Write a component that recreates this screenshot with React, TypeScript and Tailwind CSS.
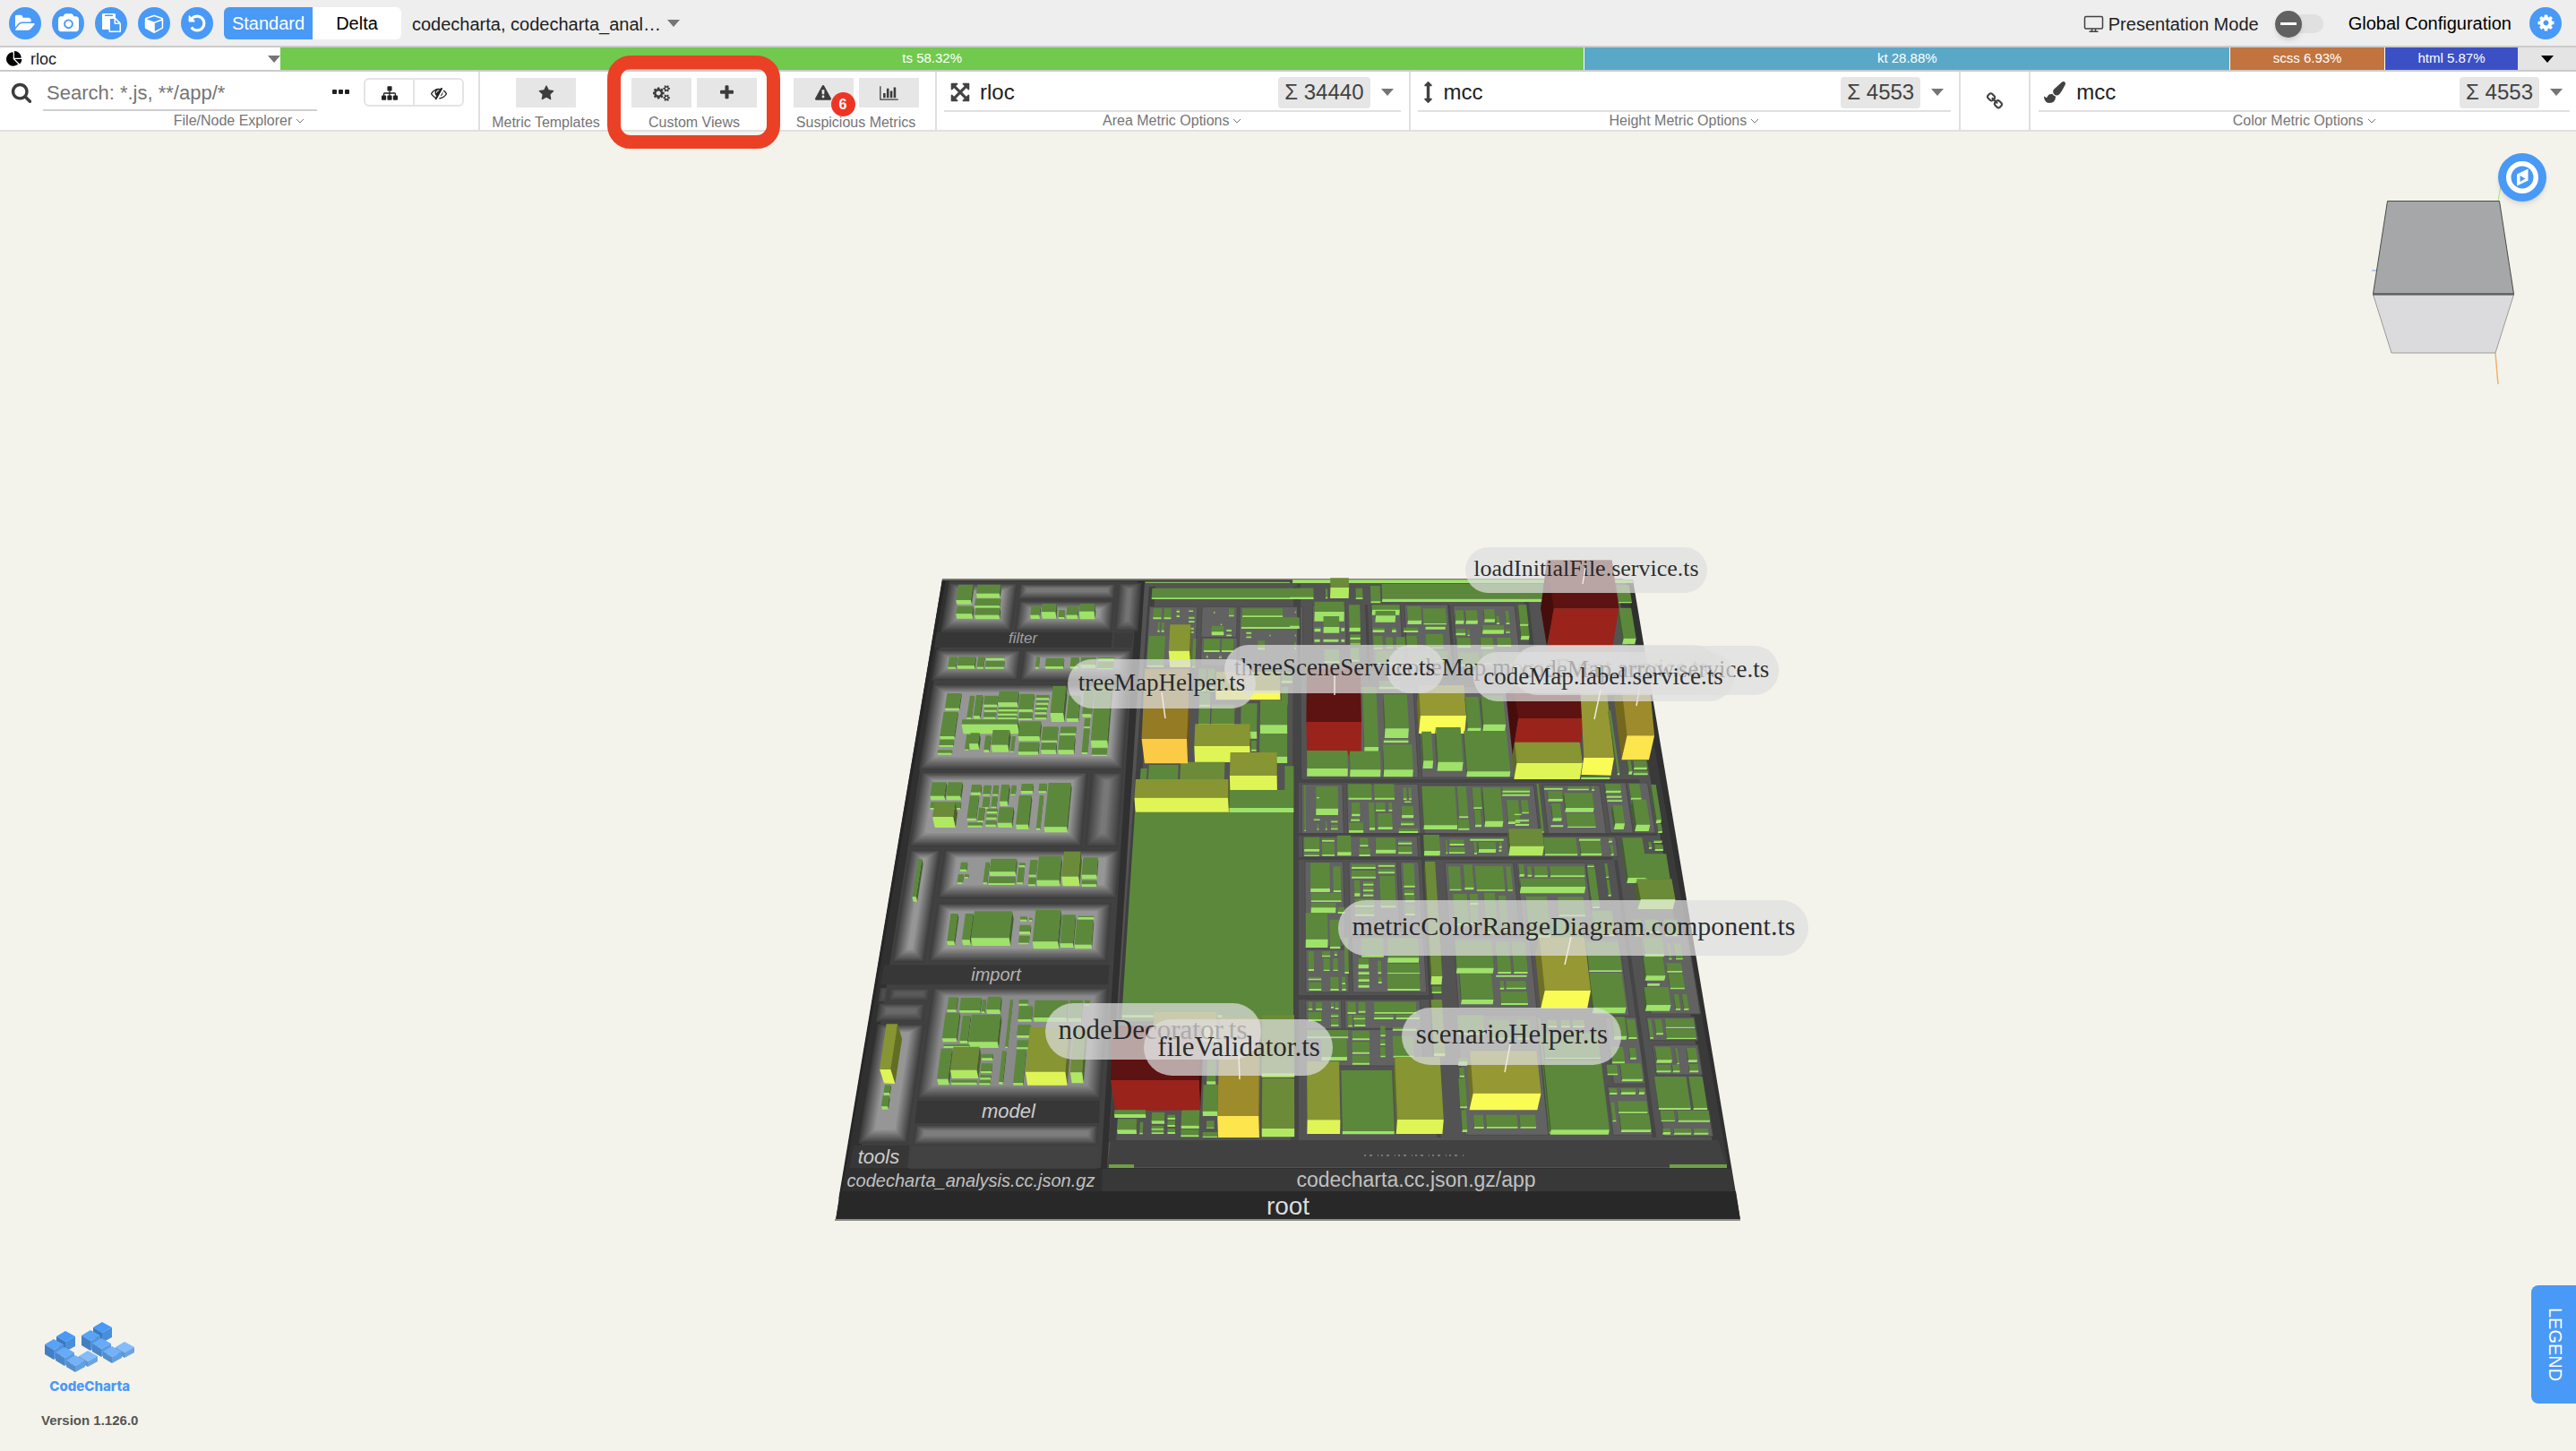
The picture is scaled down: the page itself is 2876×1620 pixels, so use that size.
import React, { ReactNode } from "react";

/* ---------- icons ---------- */

const ICONS = {
  folder:
    "M1815 952q0 31-31 66l-336 396q-43 51-120.500 86.500t-143.500 35.500h-1088q-34 0-60.500-13t-26.500-43q0-31 31-66l336-396q43-51 120.500-86.500t143.500-35.500h1088q34 0 60.500 13t26.500 43zm-343-344v160h-832q-94 0-197 47.500t-164 119.500l-337 396-5 6q0-4-.5-12.500t-.5-12.500v-960q0-92 66-158t158-66h320q92 0 158 66t66 158v32h544q92 0 158 66t66 158z",
  camera:
    "M896 672q119 0 203.500 84.500t84.500 203.500-84.500 203.500-203.500 84.500-203.500-84.500-84.500-203.500 84.500-203.500 203.500-84.500zm704-416q106 0 181 75t75 181v896q0 106-75 181t-181 75h-1408q-106 0-181-75t-75-181v-896q0-106 75-181t181-75h224l51-136q19-49 69.500-84.500t103.500-35.500h512q53 0 103.500 35.500t69.500 84.500l51 136h224zm-704 1152q185 0 316.500-131.500t131.500-316.500-131.500-316.500-316.500-131.500-316.500 131.500-131.500 316.500 131.500 316.500 316.500 131.500z",
  paste:
    "M768 1664h896v-640h-416q-40 0-68-28t-28-68v-416h-384v1152zm256-1440v-64q0-13-9.500-22.500t-22.500-9.500h-704q-13 0-22.500 9.500t-9.500 22.500v64q0 13 9.500 22.500t22.500 9.500h704q13 0 22.500-9.500t9.500-22.500zm256 672h299l-299-299v299zm512 128v672q0 40-28 68t-68 28h-960q-40 0-68-28t-28-68v-160h-544q-40 0-68-28t-28-68v-1344q0-40 28-68t68-28h1088q40 0 68 28t28 68v328q21 13 36 28l408 408q28 28 48 76t20 88z",
  cube: "M896 1629l640-349v-636l-640 233v752zm-64-865l698-254-698-254-698 254zm832-252v768q0 35-18 65t-49 47l-704 384q-28 16-61 16t-61-16l-704-384q-31-17-49-47t-18-65v-768q0-40 23-73t61-47l704-256q22-8 44-8t44 8l704 256q38 14 61 47t23 73z",
  undo: "M1664 896q0 156-61 298t-164 245-245 164-298 61q-172 0-327-72.500t-264-204.500q-7-10-6.500-22.500t8.500-20.500l137-138q10-9 25-9 16 2 23 12 73 95 179 147t225 52q104 0 198.500-40.500t163.500-109.500 109.500-163.500 40.500-198.500-40.500-198.500-109.500-163.500-163.500-109.500-198.500-40.500q-98 0-188 35.500t-160 101.500l137 138q31 30 14 69-17 40-59 40h-448q-26 0-45-19t-19-45v-448q0-42 40-59 39-17 69 14l130 129q107-101 244.500-156.500t284.500-55.500q156 0 298 61t245 164 164 245 61 298z",
  cog: "M1152 896q0-106-75-181t-181-75-181 75-75 181 75 181 181 75 181-75 75-181zm512-109v222q0 12-8 23t-20 13l-185 28q-19 54-39 91 35 50 107 138 10 12 10 25t-9 23q-27 37-99 108t-94 71q-12 0-26-9l-138-108q-44 23-91 38-16 136-29 186-7 28-36 28h-222q-14 0-24.500-8.500t-11.500-21.500l-28-184q-49-16-90-37l-141 107q-10 9-25 9-14 0-25-11-126-114-165-168-7-10-7-23 0-12 8-23 15-21 51-66.500t54-70.500q-27-50-41-99l-183-27q-13-2-21-12.500t-8-23.500v-222q0-12 8-23t19-13l186-28q14-46 39-92-40-57-107-138-10-12-10-24 0-10 9-23 26-36 98.500-107.500t94.500-71.500q13 0 26 10l138 107q44-23 91-38 16-136 29-186 7-28 36-28h222q14 0 24.500 8.500t11.500 21.500l28 184q49 16 90 37l142-107q9-9 24-9 13 0 25 10 129 119 165 170 7 8 7 22 0 12-8 23-15 21-51 66.500t-54 70.500q26 50 41 98l183 28q13 2 21 12.500t8 23.500z",
  pie: "M768 890l546 546q-106 108-247.500 168t-298.500 60q-209 0-385.500-103t-279.500-279.500-103-385.500 103-385.500 279.500-279.500 385.500-103v762zm187 6h773q0 157-60 298.500t-168 247.500zm709-128h-768v-768q209 0 385.500 103t279.500 279.500 103 385.500z",
  search:
    "M1216 832q0-185-131.500-316.500t-316.500-131.500-316.500 131.500-131.500 316.500 131.500 316.500 316.500 131.500 316.500-131.500 131.500-316.500zm512 832q0 52-38 90t-90 38q-54 0-90-38l-343-342q-179 124-399 124-143 0-273.500-55.500t-225-150-150-225-55.500-273.500 55.500-273.500 150-225 225-150 273.500-55.500 273.500 55.500 225 150 150 225 55.500 273.500q0 220-124 399l343 343q37 37 37 90z",
  sitemap:
    "M1792 1248v320q0 40-28 68t-68 28h-320q-40 0-68-28t-28-68v-320q0-40 28-68t68-28h96v-192h-512v192h96q40 0 68 28t28 68v320q0 40-28 68t-68 28h-320q-40 0-68-28t-28-68v-320q0-40 28-68t68-28h96v-192h-512v192h96q40 0 68 28t28 68v320q0 40-28 68t-68 28h-320q-40 0-68-28t-28-68v-320q0-40 28-68t68-28h96v-192q0-52 38-90t90-38h512v-192h-96q-40 0-68-28t-28-68v-320q0-40 28-68t68-28h320q40 0 68 28t28 68v320q0 40-28 68t-68 28h-96v192h512q52 0 90 38t38 90v192h96q40 0 68 28t28 68z",
  eyeSlash:
    "M555 1335l78-141q-87-63-136-159t-49-203q0-121 61-225-229 117-381 353 167 258 427 375zm389-759q0-20-14-34t-34-14q-125 0-214.500 89.500t-89.500 214.500q0 20 14 34t34 14 34-14 14-34q0-86 61-147t147-61q20 0 34-14t14-34zm363-191q0 7-1 9-106 189-316 567t-315 566l-49 89q-10 16-28 16-12 0-134-70-16-10-16-28 0-12 44-87-143-65-263.500-173t-208.500-245q-20-31-20-69t20-69q153-235 380-371t496-136q89 0 180 17l54-97q10-16 28-16 5 0 18 6t31 15.500 33 18.500 31.500 18.500 19.500 11.500q16 10 16 27zm37 447q0 139-79 253.500t-209 164.500l280-502q8 45 8 84zm448 128q0 35-20 69-39 64-109 145-150 172-347.500 267t-419.500 95l74-132q212-18 392.500-137t301.500-307q-115-179-282-294l63-112q95 64 182.500 153t144.500 184q20 34 20 69z",
  star: "M1728 647q0 22-26 48l-363 354 86 500q1 7 1 20 0 21-10.500 35.500t-30.500 14.500q-19 0-40-12l-449-236-449 236q-22 12-40 12-21 0-31.500-14.500t-10.500-35.500q0-6 2-20l86-500-364-354q-25-27-25-48 0-37 56-46l502-73 225-455q19-41 49-41t49 41l225 455 502 73q56 9 56 46z",
  cogs: "M832 896q0-106-75-181t-181-75-181 75-75 181 75 181 181 75 181-75 75-181zm768 512q0-52-38-90t-90-38-90 38-38 90q0 53 37.500 90.500t90.500 37.500 90.500-37.500 37.500-90.500zm0-1024q0-52-38-90t-90-38-90 38-38 90q0 53 37.500 90.500t90.500 37.500 90.500-37.500 37.500-90.500zm-384 421v185q0 10-7 19.500t-16 10.500l-155 24q-11 35-32 76 34 48 90 115 7 11 7 20 0 12-7 19-23 30-82.500 89.500t-78.500 59.500q-11 0-21-7l-115-90q-37 19-77 31-11 108-23 155-7 24-30 24h-186q-11 0-20-7.500t-10-17.500l-23-153q-34-10-75-31l-118 89q-7 7-20 7-11 0-21-8-144-133-144-160 0-9 7-19 10-14 41-53t47-61q-23-44-35-82l-152-24q-10-1-17-9.500t-7-19.500v-185q0-10 7-19.500t16-10.500l155-24q11-35 32-76-34-48-90-115-7-11-7-20 0-12 7-20 22-30 82-89t79-59q11 0 21 7l115 90q34-18 77-32 11-108 23-154 7-24 30-24h186q11 0 20 7.500t10 17.500l23 153q34 10 75 31l118-89q8-7 20-7 11 0 21 8 144 133 144 160 0 8-7 19-12 16-42 54t-45 60q23 48 34 82l152 23q10 2 17 10.500t7 19.500zm640 533v140q0 16-149 31-12 27-30 52 51 113 51 138 0 4-4 7-122 71-124 71-8 0-46-47t-52-68q-20 2-30 2t-30-2q-14 21-52 68t-46 47q-2 0-124-71-4-3-4-7 0-25 51-138-18-25-30-52-149-15-149-31v-140q0-16 149-31 13-29 30-52-51-113-51-138 0-4 4-7 4-2 35-20t59-34 30-16q8 0 46 46.500t52 67.500q20-2 30-2t30 2q51-71 92-112l6-2q4 0 124 70 4 3 4 7 0 25-51 138 17 23 30 52 149 15 149 31zm0-1024v140q0 16-149 31-12 27-30 52 51 113 51 138 0 4-4 7-122 71-124 71-8 0-46-47t-52-68q-20 2-30 2t-30-2q-14 21-52 68t-46 47q-2 0-124-71-4-3-4-7 0-25 51-138-18-25-30-52-149-15-149-31v-140q0-16 149-31 13-29 30-52-51-113-51-138 0-4 4-7 4-2 35-20t59-34 30-16q8 0 46 46.500t52 67.500q20-2 30-2t30 2q51-71 92-112l6-2q4 0 124 70 4 3 4 7 0 25-51 138 17 23 30 52 149 15 149 31z",
  plus: "M1600 736v192q0 40-28 68t-68 28h-416v416q0 40-28 68t-68 28h-192q-40 0-68-28t-28-68v-416h-416q-40 0-68-28t-28-68v-192q0-40 28-68t68-28h416v-416q0-40 28-68t68-28h192q40 0 68 28t28 68v416h416q40 0 68 28t28 68z",
  warning:
    "M1024 1375v-190q0-14-9.500-23.500t-22.500-9.500h-192q-13 0-22.500 9.500t-9.500 23.500v190q0 14 9.500 23.500t22.500 9.500h192q13 0 22.500-9.500t9.500-23.500zm-2-374l18-459q0-12-10-19-13-11-24-11h-220q-11 0-24 11-10 7-10 21l17 457q0 10 10 16.500t24 6.500h185q14 0 23.500-6.500t10.500-16.500zm-14-934l768 1408q35 63-2 126-17 29-46.500 46t-63.500 17h-1536q-34 0-63.500-17t-46.500-46q-37-63-2-126l768-1408q17-31 47-49t65-18 65 18 47 49z",
  chart:
    "M640 896v512h-256v-512h256zm384-512v1024h-256v-1024h256zm1024 1152v128h-2048v-1536h128v1408h1920zm-640-896v768h-256v-768h256zm384-384v1152h-256v-1152h256z",
  expand:
    "M1411 541l-355 355 355 355 144-144q29-31 70-14 39 17 39 59v448q0 26-19 45t-45 19h-448q-42 0-59-40-17-39 14-69l144-144-355-355-355 355 144 144q31 30 14 69-17 40-59 40h-448q-26 0-45-19t-19-45v-448q0-42 40-59 39-17 69 14l144 144 355-355-355-355-144 144q-19 19-45 19-12 0-24-5-40-17-40-59v-448q0-26 19-45t45-19h448q42 0 59 40 17 39-14 69l-144 144 355 355 355-355-144-144q-31-30-14-69 17-40 59-40h448q26 0 45 19t19 45v448q0 42-39 59-13 5-25 5-26 0-45-19z",
  vertical:
    "M1216 320q0 26-19 45t-45 19h-128v1024h128q26 0 45 19t19 45-19 45l-256 256q-19 19-45 19t-45-19l-256-256q-19-19-19-45t19-45 45-19h128v-1024h-128q-26 0-45-19t-19-45 19-45l256-256q19-19 45-19t45 19l256 256q19 19 19 45z",
  link: "M1520 1216q0-40-28-68l-208-208q-28-28-68-28-42 0-72 32 3 3 19 18.500t21.500 21.500 15 19 13 25.500 3.500 27.500q0 40-28 68t-68 28q-15 0-27.500-3.500t-25.500-13-19-15-21.500-21.500-18.500-19q-33 31-33 73 0 40 28 68l206 207q27 27 68 27 40 0 68-26l147-146q28-28 28-67zm-703-705q0-40-28-68l-206-207q-28-28-68-28-39 0-68 27l-147 146q-28 28-28 67 0 40 28 68l208 208q27 27 68 27 42 0 72-31-3-3-19-18.500t-21.500-21.500-15-19-13-25.500-3.500-27.500q0-40 28-68t68-28q15 0 27.500 3.500t25.500 13 19 15 21.500 21.500 18.500 19q33-31 33-73zm895 705q0 120-85 203l-147 146q-83 83-203 83-121 0-204-85l-206-207q-83-83-83-203 0-123 88-209l-88-88q-86 88-208 88-120 0-204-84l-208-208q-84-84-84-204t85-203l147-146q83-83 203-83 121 0 204 85l206 207q83 83 83 203 0 123-88 209l88 88q86-88 208-88 120 0 204 84l208 208q84 84 84 204z",
  brush:
    "M1615 0q70 0 122.500 46.500t52.500 116.500q0 63-45 151-332 629-465 752-97 91-218 91-126 0-216.500-92.500t-90.500-219.500q0-128 92-212l638-579q59-54 130-54zm-909 1034q39 76 106.500 130t150.500 76l1 71q4 213-129.500 347t-348.500 134q-123 0-218-46.500t-152.500-127.500-86.500-183-29-220q7 5 41 30t62 44.500 59 36.500 46 17q41 0 55-37 25-66 57.500-112.500t69.500-76 88-47.500 103-25.500 125-10.500z",
};

function Icon({ name, className, box = "0 0 1792 1792" }: { name: keyof typeof ICONS; className: string; box?: string }) {
  return (
    <svg viewBox={box} className={className} fill="currentColor" aria-hidden="true">
      <path d={ICONS[name]} />
    </svg>
  );
}

function Caret({ className = "text-[#757575]" }: { className?: string }) {
  return (
    <svg viewBox="0 0 14 8" className={`h-2 w-[14px] shrink-0 ${className}`} fill="currentColor" aria-hidden="true">
      <path d="M0 0h14L7 8z" />
    </svg>
  );
}

function Chevron() {
  return (
    <svg viewBox="0 0 10 8" className="h-2 w-[10px]" fill="none" stroke="currentColor" strokeWidth="1" aria-hidden="true">
      <path d="M1 2l4 4 4-4" />
    </svg>
  );
}

/* ---------- toolbar pieces ---------- */

function RoundButton({ label, children }: { label: string; children: ReactNode }) {
  return (
    <button aria-label={label} className="flex size-9 items-center justify-center rounded-full bg-[#4999f6] text-white">
      {children}
    </button>
  );
}

function FlatButton({ label, children }: { label: string; children: ReactNode }) {
  return (
    <button aria-label={label} className="relative flex h-[33px] w-[67px] items-center justify-center bg-[#e6e6e6] text-[#3c3c3c]">
      {children}
    </button>
  );
}

function ToolGroup({ title, className, children }: { title: string; className: string; children: ReactNode }) {
  return (
    <div className={`flex shrink-0 flex-col items-center pt-[7px] ${className}`}>
      <div className="flex gap-[6px]">{children}</div>
      <div className="mt-[7px] whitespace-nowrap text-[16px] leading-5 text-[#757575]">{title}</div>
    </div>
  );
}

function OptionsToggle({ title }: { title: string }) {
  return (
    <button className="mx-auto flex items-center gap-1 whitespace-nowrap text-[16px] leading-5 text-[#757575]">
      {title}
      <Chevron />
    </button>
  );
}

function MetricPanel({ title, value, sum, icon, className }: { title: string; value: string; sum: string; icon: ReactNode; className: string }) {
  return (
    <div className={`flex min-w-0 flex-col ${className}`}>
      <div className="flex h-[46px] items-center border-b-2 border-[#e0e0e0] pl-[6px] pr-2 pt-[3px]">
        <span className="flex shrink-0 items-center text-[#424242]">{icon}</span>
        <select aria-label={title} className="min-w-0 flex-1 appearance-none bg-transparent text-[24px] leading-8 text-[#212121]">
          <option>{value}</option>
        </select>
        <span className="mr-3 flex h-[35px] items-center rounded bg-[#e6e6e6] px-[7px] text-[24px] text-[#424242]">Σ {sum}</span>
        <Caret />
      </div>
      <OptionsToggle title={title} />
    </div>
  );
}

/* ---------- city map drawing ---------- */

type View = { ox: number; oy: number; sx: number; sy: number };
const A: View = { ox: 920, oy: 600, sx: 2.8, sy: 3 };
const B: View = { ox: 1440, oy: 600, sx: 2.6133, sy: 3 };
const C: View = { ox: 920, oy: 980, sx: 2.8, sy: 3 };
const D: View = { ox: 1440, oy: 980, sx: 2.6133, sy: 3 };

const VX = 1437;
const VY = -1675;
const at = (x: number, y0: number, y1: number) => VX + ((x - VX) * (y1 - VY)) / (y0 - VY);
const f = (n: number) => n.toFixed(1);

function quad(x0: number, x1: number, y0: number, y1: number) {
  return `${f(x0)},${f(y0)} ${f(x1)},${f(y0)} ${f(at(x1, y0, y1))},${f(y1)} ${f(at(x0, y0, y1))},${f(y1)}`;
}

const PAL: Record<string, [string, string, string]> = {
  g: ["#5c883c", "#9ee269", "#41622b"],
  h: ["#6b8b38", "#b1e862", "#4b6327"],
  o: ["#879532", "#dff555", "#5f6b25"],
  y: ["#969833", "#f8fc55", "#6e7124"],
  a: ["#967b25", "#fbcb46", "#6b5519"],
  b: ["#9e8b2b", "#fde54d", "#75681d"],
  r: ["#5c1311", "#9a231c", "#460d0c"],
};

type Block = [number, number, number, number, number, string?];

function Blocks({ v, data }: { v: View; data: Block[] }) {
  return (
    <>
      {data.map(([x, y, w, t, fr, c = "g"], i) => {
        const [top, front, side] = PAL[c];
        const x0 = v.ox + x / v.sx;
        const x1 = v.ox + (x + w) / v.sx;
        const y0 = v.oy + y / v.sy;
        const y1 = y0 + t / v.sy;
        const y2 = y1 + fr / v.sy;
        const b0 = at(x0, y0, y1);
        const b1 = at(x1, y0, y1);
        const s = ((VX - (x0 + x1) / 2) / 480) * (fr / v.sy) * 0.28;
        const sideX0 = s > 0 ? x1 : x0;
        const sideX1 = s > 0 ? b1 : b0;
        return (
          <g key={i}>
            {Math.abs(s) > 0.2 && (
              <polygon
                fill={side}
                points={`${f(sideX0)},${f(y0)} ${f(sideX0 + s)},${f(y0 + fr / v.sy)} ${f(sideX1 + s)},${f(y2)} ${f(sideX1)},${f(y1)}`}
              />
            )}
            <polygon fill={top} points={quad(x0, x1, y0, y1)} />
            <polygon fill={front} points={`${f(b0)},${f(y1)} ${f(b1)},${f(y1)} ${f(b1 + s)},${f(y2)} ${f(b0 + s)},${f(y2)}`} />
          </g>
        );
      })}
    </>
  );
}

function Poly({ v, fill, p }: { v: View; fill: string; p: number[] }) {
  const pts: string[] = [];
  for (let i = 0; i < p.length; i += 2) pts.push(`${f(v.ox + p[i] / v.sx)},${f(v.oy + p[i + 1] / v.sy)}`);
  return <polygon fill={fill} points={pts.join(" ")} />;
}

/* A terrace: nested frames that get lighter towards the middle. */
function Terrace({ v, x0, x1, y0, y1, max = 150 }: { v: View; x0: number; x1: number; y0: number; y1: number; max?: number }) {
  const px0 = v.ox + x0 / v.sx;
  const px1 = v.ox + x1 / v.sx;
  const py0 = v.oy + y0 / v.sy;
  const py1 = v.oy + y1 / v.sy;
  const inset = Math.min(15, (px1 - px0) / 2.4, (py1 - py0) / 2.2);
  const n = 9;
  return (
    <>
      {Array.from({ length: n }, (_, i) => {
        const d = (inset * i) / (n - 1);
        const g = Math.round(62 + ((max - 62) * i) / (n - 1));
        const l = at(px0, py0, py0 + d * 0.6) + d;
        const r = at(px1, py0, py0 + d * 0.6) - d;
        return <polygon key={i} fill={`rgb(${g},${g},${g})`} points={quad(l, r, py0 + d * 0.6, py1 - d)} />;
      })}
    </>
  );
}

const TERRACES: [View, number, number, number, number, number?][] = [
  [A, 390, 606, 152, 316],
  [A, 612, 912, 155, 208, 120],
  [A, 608, 908, 212, 316],
  [A, 920, 992, 152, 314, 115],
  [A, 352, 618, 376, 480],
  [A, 624, 965, 376, 482],
  [A, 340, 955, 492, 780],
  [A, 303, 826, 786, 1036],
  [A, 836, 936, 786, 1038, 120],
  [A, 268, 366, 1046, 1424],
  [A, 376, 926, 1046, 1210],
  [C, 354, 898, 85, 282],
  [C, 176, 202, 368, 416, 80],
  [C, 206, 332, 370, 414, 90],
  [C, 172, 318, 420, 482, 105],
  [C, 168, 314, 490, 890],
  [C, 340, 890, 368, 742, 138],
  [C, 286, 858, 828, 896, 125],
];

const LEFT_TOP: Block[] = [
  [420, 158, 46, 52, 14], [480, 158, 72, 30, 15], [474, 205, 78, 24, 7], [416, 230, 50, 26, 16], [474, 236, 76, 24, 14],
  [648, 230, 28, 30, 13], [683, 222, 43, 28, 22], [735, 243, 18, 24, 6], [760, 230, 35, 30, 13], [800, 222, 46, 26, 26],
  [392, 400, 24, 34, 6], [420, 400, 54, 30, 10], [482, 400, 20, 34, 6], [506, 400, 58, 4, 8], [506, 414, 58, 20, 6],
  [664, 400, 10, 34, 6], [694, 404, 56, 28, 8], [772, 402, 24, 30, 8], [804, 402, 46, 24, 12], [858, 402, 50, 4, 8], [856, 416, 50, 22, 4],
  [385, 522, 44, 50, 8], [374, 584, 44, 82, 9], [362, 678, 44, 18, 6], [356, 712, 44, 10, 6],
  [456, 530, 14, 74, 5], [476, 528, 20, 70, 10], [502, 530, 42, 30, 8], [502, 570, 38, 8, 6], [500, 586, 38, 16, 6],
  [548, 515, 60, 38, 14], [545, 570, 60, 6, 6], [544, 584, 60, 6, 6], [543, 598, 60, 6, 6],
  [613, 524, 44, 52, 8], [610, 586, 42, 20, 6],
  [664, 528, 40, 10, 6], [664, 546, 38, 8, 6], [662, 562, 36, 8, 6], [660, 578, 36, 8, 6], [660, 594, 36, 10, 6],
  [716, 498, 40, 90, 30], [765, 530, 36, 76, 12], [815, 500, 28, 92, 10], [850, 480, 50, 200, 24], [838, 706, 48, 22, 4],
  [815, 606, 18, 28, 4], [812, 640, 18, 80, 6], [432, 610, 174, 16, 32],
  [446, 660, 12, 50, 4], [458, 655, 28, 36, 20], [505, 664, 16, 48, 8], [528, 645, 52, 50, 24], [588, 666, 10, 50, 4],
  [612, 616, 66, 50, 16], [610, 686, 62, 32, 10], [684, 634, 48, 46, 6], [680, 688, 46, 24, 14], [740, 634, 48, 22, 6], [736, 664, 48, 48, 15],
  [338, 820, 44, 46, 14], [388, 820, 44, 46, 14], [334, 886, 94, 20, 6], [346, 888, 64, 48, 36, "h"],
  [462, 828, 30, 26, 9], [500, 830, 22, 30, 5], [530, 830, 16, 30, 5], [555, 828, 24, 56, 16], [587, 830, 14, 30, 4], [456, 865, 28, 76, 8], [498, 870, 20, 34, 5], [526, 868, 16, 34, 5],
  [485, 905, 18, 44, 5], [510, 908, 32, 10, 6], [508, 928, 32, 10, 6], [506, 948, 32, 14, 8], [450, 955, 45, 10, 6], [548, 904, 44, 52, 16],
  [618, 825, 36, 24, 10], [610, 864, 38, 98, 16], [673, 824, 24, 26, 6], [674, 864, 12, 110, 6], [702, 822, 70, 148, 18],
  [294, 1078, 12, 126, 16],
  [428, 1088, 20, 24, 7], [420, 1128, 16, 28, 5], [440, 1128, 12, 10, 4], [505, 1088, 12, 68, 6], [522, 1076, 80, 44, 14], [516, 1136, 82, 22, 6], [610, 1090, 18, 8, 5], [608, 1106, 18, 50, 6],
  [645, 1080, 22, 50, 6], [640, 1140, 22, 22, 6], [672, 1068, 70, 80, 20], [750, 1052, 52, 84, 32, "h"], [810, 1072, 46, 58, 14], [806, 1148, 46, 14, 8],
];

const LEFT_BOTTOM: Block[] = [
  [396, 120, 22, 92, 14], [442, 120, 24, 88, 18], [470, 112, 118, 90, 26], [614, 130, 20, 10, 6], [642, 134, 8, 8, 5], [612, 158, 34, 22, 10], [610, 194, 32, 24, 5],
  [662, 108, 78, 106, 24], [746, 124, 40, 96, 14], [794, 128, 50, 4, 8], [790, 140, 52, 84, 14],
  [190, 694, 18, 26, 8], [184, 730, 20, 36, 10],
  [390, 400, 28, 42, 8], [428, 402, 64, 42, 8], [496, 408, 10, 40, 6], [512, 398, 42, 44, 14], [582, 408, 8, 158, 4],
  [610, 408, 28, 14, 6], [610, 430, 42, 44, 8], [660, 410, 102, 58, 14], [768, 410, 40, 60, 12], [815, 410, 16, 14, 5],
  [380, 452, 44, 86, 12], [434, 462, 24, 84, 8], [462, 458, 90, 92, 20], [374, 558, 80, 6, 6],
  [366, 572, 34, 102, 20], [404, 566, 82, 78, 28, "h"], [398, 678, 80, 8, 8],
  [494, 590, 34, 14, 8], [492, 622, 34, 26, 6], [488, 660, 34, 10, 6], [486, 678, 34, 10, 6], [557, 580, 12, 104, 8],
  [606, 492, 40, 36, 8], [604, 544, 40, 24, 6], [602, 575, 30, 112, 8],
  [782, 500, 36, 152, 36, "h"], [644, 500, 122, 150, 45, "o"],
];

const MIDDLE: Block[] = [
  [1026, 170, 504, 32, 5],
  [1030, 238, 26, 30, 6], [1064, 238, 22, 30, 6], [1102, 240, 10, 6, 5], [1102, 256, 10, 6, 5], [1140, 242, 14, 3, 4], [1140, 264, 18, 4, 4], [1140, 278, 18, 2, 5], [1044, 285, 6, 26, 6], [1056, 285, 8, 26, 6],
  [1015, 330, 52, 98, 6], [1154, 340, 10, 92, 4], [1142, 300, 14, 4, 4], [1142, 312, 14, 4, 4], [1082, 292, 64, 88, 55, "o"],
  [1266, 238, 16, 22, 5], [1212, 296, 38, 20, 12], [1258, 306, 16, 4, 5], [1258, 322, 16, 4, 5], [1308, 238, 126, 24, 5], [1305, 268, 180, 32, 6], [1320, 314, 16, 4, 5], [1320, 328, 16, 4, 5],
  [1356, 346, 22, 24, 6], [1188, 340, 50, 38, 6], [1244, 340, 36, 38, 6], [1235, 392, 8, 8, 4], [1195, 392, 6, 6, 5],
  [1218, 246, 4, 4, 4], [1240, 286, 4, 4, 4], [1472, 244, 4, 6, 3], [1392, 322, 4, 6, 3], [1472, 322, 4, 6, 3], [1470, 350, 6, 20, 4],
  [1172, 440, 24, 60, 16], [1200, 440, 22, 60, 16], [1174, 520, 34, 40, 8], [1430, 450, 34, 30, 8], [1430, 500, 20, 60, 0],
  [1226, 450, 200, 62, 32, "y"],
  [1172, 570, 36, 54, 6], [1212, 560, 72, 64, 6], [1304, 556, 50, 94, 24], [1364, 546, 84, 82, 30], [1362, 658, 86, 76, 22], [1336, 680, 16, 30, 6],
  [1160, 625, 172, 74, 54, "o"],
  [990, 774, 20, 40, 0], [1016, 762, 92, 50, 0], [1115, 752, 138, 60, 0, "h"], [1440, 766, 28, 80, 0], [1268, 846, 200, 60, 15],
  [1270, 720, 146, 78, 48, "o"], [974, 810, 290, 62, 48, "o"],
];

const MIDDLE_BOTTOM: Block[] = [
  [932, 456, 98, 4, 8], [1032, 450, 195, 50, 50, "y"], [1230, 456, 14, 4, 8],
  [908, 778, 98, 14, 12], [918, 808, 60, 36, 14], [988, 818, 10, 36, 5], [1025, 786, 40, 28, 10], [1024, 830, 38, 10, 5], [1024, 845, 38, 8, 5],
  [1074, 794, 24, 10, 6], [1074, 812, 24, 16, 6], [1074, 840, 24, 12, 6], [1118, 778, 56, 52, 10], [1116, 842, 56, 20, 6], [1198, 610, 28, 72, 10], [1186, 694, 46, 88, 16],
  [1196, 814, 24, 22, 3], [1184, 852, 46, 14, 4],
  [1238, 470, 124, 328, 72, "b"], [1370, 460, 100, 195, 13, "h"], [1370, 672, 100, 168, 28, "h"],
];

const RIGHT_TOP: Block[] = [
  [268, 156, 470, 50, 10], [0, 170, 68, 30, 6], [104, 172, 6, 28, 5], [118, 136, 54, 32, 36, "h"], [192, 170, 20, 32, 5], [235, 162, 28, 52, 6],
  [0, 270, 28, 26, 10], [72, 215, 86, 34, 32], [72, 300, 18, 6, 10], [150, 300, 10, 4, 10], [98, 264, 46, 36, 20], [72, 338, 16, 4, 8], [98, 338, 44, 4, 8], [150, 338, 10, 4, 8],
  [172, 226, 32, 76, 14], [176, 325, 30, 10, 8], [176, 345, 30, 10, 4], [100, 375, 44, 40, 6], [176, 370, 26, 40, 6],
  [240, 226, 80, 16, 18], [250, 246, 58, 16, 22], [242, 302, 34, 8, 8], [298, 302, 12, 8, 8], [332, 302, 42, 10, 6], [342, 230, 40, 48, 13], [388, 238, 66, 50, 4], [396, 296, 58, 4, 8],
  [244, 330, 26, 40, 4], [280, 334, 20, 34, 4], [310, 334, 26, 34, 4], [396, 324, 50, 44, 4], [340, 330, 30, 34, 4], [250, 380, 80, 40, 6], [350, 380, 60, 40, 6], [420, 380, 40, 30, 6],
  [482, 244, 24, 34, 12], [512, 244, 34, 34, 12], [566, 240, 30, 34, 10], [602, 264, 8, 22, 5], [628, 246, 10, 40, 5], [484, 306, 28, 14, 8], [518, 308, 6, 18, 4], [562, 294, 62, 16, 13],
  [488, 336, 38, 26, 8], [556, 336, 36, 30, 8], [604, 336, 40, 24, 6], [630, 308, 12, 8, 4], [490, 385, 60, 40, 6], [560, 380, 40, 40, 6], [620, 385, 50, 40, 6], [666, 226, 24, 64, 8], [672, 296, 24, 34, 13],
  [952, 160, 38, 56, 4], [960, 236, 36, 102, 20],
  [212, 500, 40, 202, 14], [274, 526, 68, 114, 32], [274, 676, 72, 4, 8], [260, 480, 60, 20, 8],
  [376, 495, 132, 102, 60, "y"], [512, 534, 38, 104, 10], [558, 530, 64, 96, 22],
  [385, 650, 28, 98, 26], [426, 636, 72, 116, 30], [508, 648, 124, 136, 18],
];

const RIGHT_MID: Block[] = [
  [985, 748, 10, 36, 10], [1002, 748, 38, 22, 8], [1002, 782, 42, 8, 6], [850, 800, 84, 4, 6], [930, 580, 6, 210, 6],
  [42, 830, 4, 150, 4], [76, 834, 64, 74, 22], [78, 868, 8, 2, 4], [70, 940, 18, 4, 4], [120, 946, 20, 4, 5], [120, 962, 20, 12, 5], [80, 960, 4, 14, 6], [104, 950, 4, 24, 6],
  [170, 826, 68, 46, 6], [246, 826, 58, 46, 6], [330, 838, 10, 36, 5], [346, 838, 8, 36, 4], [334, 880, 20, 4, 4], [326, 900, 34, 30, 10], [324, 950, 38, 8, 6], [318, 974, 56, 10, 6],
  [180, 888, 24, 38, 8], [178, 938, 26, 6, 6], [172, 955, 42, 26, 8], [230, 888, 16, 84, 8], [250, 888, 28, 24, 5], [288, 888, 10, 24, 5], [256, 924, 42, 46, 8],
  [385, 834, 96, 130, 14], [488, 834, 26, 100, 6], [490, 944, 32, 30, 6], [532, 838, 24, 66, 5], [538, 912, 18, 50, 8], [562, 838, 52, 112, 20], [620, 838, 80, 10, 6], [620, 856, 80, 4, 6],
  [632, 880, 34, 72, 8], [674, 880, 20, 40, 5], [656, 926, 20, 0, 4], [658, 942, 40, 4, 6], [658, 956, 40, 4, 6],
  [720, 825, 6, 160, 4], [742, 836, 54, 4, 5], [810, 834, 62, 8, 5], [880, 834, 8, 10, 5], [752, 850, 42, 26, 8], [800, 856, 82, 50, 14], [763, 892, 26, 48, 10], [806, 924, 82, 44, 4], [762, 964, 36, 0, 6],
  [920, 826, 44, 22, 8], [924, 860, 44, 6, 6], [926, 876, 44, 4, 5], [942, 898, 28, 60, 20], [990, 826, 30, 46, 6], [1000, 878, 40, 84, 22], [1054, 828, 14, 118, 12], [1072, 960, 12, 24, 6],
  [42, 1004, 44, 40, 8], [42, 1056, 44, 8, 4], [94, 1008, 36, 6, 5], [94, 1022, 36, 40, 5], [138, 998, 40, 56, 12], [204, 1006, 24, 24, 6], [202, 1042, 32, 20, 6], [250, 1006, 58, 40, 12],
  [316, 1016, 40, 6, 6], [316, 1034, 40, 20, 6], [390, 996, 46, 54, 16], [454, 1014, 4, 40, 6], [466, 1012, 42, 14, 6], [464, 1038, 46, 16, 5], [526, 1008, 98, 2, 6], [536, 1020, 8, 36, 5], [550, 1020, 50, 24, 12], [610, 1020, 8, 14, 6], [610, 1042, 8, 4, 6],
  [740, 1006, 94, 54, 6], [844, 1006, 62, 4, 6], [846, 1018, 60, 40, 8], [638, 976, 98, 58, 32, "h"], [930, 1008, 10, 8, 6], [934, 1030, 8, 30, 6],
  [970, 1006, 58, 134, 18], [1062, 1014, 24, 4, 5], [1064, 1028, 24, 16, 6], [1046, 1020, 8, 18, 5], [1028, 1060, 70, 84, 0],
  [60, 1090, 56, 86, 12], [126, 1102, 22, 80, 6], [180, 1094, 70, 10, 6], [180, 1116, 70, 20, 6], [258, 1094, 48, 4, 5], [258, 1110, 48, 10, 6], [330, 1092, 32, 74, 6], [334, 1178, 28, 14, 6],
  [394, 1086, 30, 384, 28, "h"], [262, 1134, 44, 100, 6],
  [462, 1102, 34, 76, 5], [506, 1096, 26, 76, 8], [540, 1100, 82, 80, 4], [630, 1102, 14, 78, 4], [668, 1096, 14, 32, 8], [692, 1102, 12, 28, 6], [712, 1102, 38, 30, 6], [758, 1102, 100, 30, 6],
  [672, 1142, 188, 28, 22], [868, 1096, 20, 4, 5], [868, 1108, 22, 120, 5], [918, 1092, 8, 44, 5], [924, 1146, 8, 50, 6],
];

const RIGHT_BOTTOM: Block[] = [
  [62, 50, 88, 26, 5], [62, 84, 72, 16, 18], [140, 98, 20, 16, 6], [46, 118, 64, 88, 28], [116, 140, 30, 90, 8],
  [188, 8, 16, 44, 10], [214, 12, 30, 8, 6], [214, 30, 30, 10, 6], [214, 50, 30, 6, 6], [190, 70, 56, 22, 6], [190, 102, 56, 20, 6], [336, 60, 28, 16, 6], [336, 90, 28, 30, 6],
  [208, 200, 64, 60, 6], [284, 200, 90, 68, 16], [284, 288, 94, 30, 4], [284, 322, 94, 50, 6],
  [54, 246, 16, 60, 6], [94, 246, 24, 14, 5], [130, 246, 8, 10, 5], [98, 270, 18, 38, 4], [126, 270, 14, 38, 4], [158, 200, 12, 115, 6],
  [200, 270, 30, 20, 14], [200, 312, 32, 4, 8], [200, 326, 32, 14, 8], [200, 350, 32, 10, 8], [256, 278, 10, 38, 6], [258, 332, 10, 16, 6],
  [54, 332, 38, 6, 5], [56, 350, 36, 22, 6], [118, 332, 24, 40, 6], [152, 332, 10, 20, 5], [152, 358, 12, 14, 6], [414, 364, 28, 18, 5],
  [476, 54, 40, 100, 6], [524, 54, 24, 30, 6], [524, 90, 24, 60, 6], [566, 50, 32, 130, 6], [608, 60, 22, 110, 6], [688, 62, 62, 130, 10], [780, 64, 76, 60, 6], [880, 60, 20, 36, 6], [760, 140, 90, 60, 6], [880, 110, 60, 80, 6],
  [482, 210, 106, 92, 18], [600, 215, 38, 100, 6], [646, 215, 40, 100, 6], [602, 326, 90, 0, 6], [496, 322, 92, 86, 16], [612, 346, 12, 22, 6], [630, 346, 58, 22, 5], [614, 382, 78, 38, 6],
  [864, 215, 94, 95, 5], [874, 318, 94, 116, 20],
  [1000, 140, 24, 50, 6], [1034, 140, 40, 40, 6], [1090, 140, 40, 50, 6], [1030, 200, 56, 55, 10], [1032, 266, 56, 62, 16], [1100, 220, 8, 50, 4], [1120, 220, 20, 50, 4], [1098, 286, 44, 26, 5], [1104, 320, 42, 48, 5],
  [1044, 354, 36, 0, 8], [1034, 366, 70, 60, 20], [1120, 390, 14, 48, 5], [1144, 390, 14, 48, 5],
  [940, 466, 36, 64, 12], [982, 474, 24, 60, 6], [1044, 474, 10, 60, 5], [1064, 474, 20, 46, 6], [1094, 472, 84, 28, 4], [1096, 506, 86, 30, 4], [990, 570, 18, 32, 6], [936, 566, 36, 50, 6],
  [1066, 566, 44, 44, 10], [1068, 626, 42, 20, 6], [1124, 570, 6, 50, 5], [1116, 626, 20, 20, 6], [1158, 570, 26, 40, 8], [1164, 624, 26, 22, 6],
  [964, 622, 60, 52, 8], [924, 626, 30, 30, 5], [932, 706, 22, 14, 6], [966, 706, 42, 12, 8], [1018, 706, 16, 12, 8], [936, 752, 10, 60, 5], [956, 748, 84, 36, 5], [962, 792, 86, 52, 8],
  [1064, 666, 92, 105, 6], [1164, 666, 40, 105, 6], [1080, 780, 40, 32, 4], [1130, 780, 92, 32, 6], [1088, 840, 22, 12, 8], [1120, 840, 50, 14, 6], [1178, 840, 42, 14, 6],
  [54, 416, 12, 22, 5], [76, 416, 18, 22, 5], [54, 450, 38, 24, 6], [120, 416, 8, 16, 5], [132, 416, 10, 20, 5], [120, 455, 22, 6, 5], [120, 472, 22, 20, 5],
  [168, 416, 24, 34, 6], [200, 416, 20, 30, 6], [170, 460, 12, 34, 5], [186, 460, 34, 10, 5], [188, 476, 32, 16, 6], [246, 416, 122, 34, 5], [246, 458, 56, 10, 6], [310, 458, 68, 10, 6],
  [50, 510, 120, 22, 6], [92, 540, 74, 60, 12], [182, 512, 50, 26, 6], [182, 550, 50, 34, 6], [182, 594, 50, 26, 6], [264, 496, 14, 30, 6], [264, 540, 14, 16, 5], [264, 566, 14, 30, 5],
  [300, 500, 70, 6, 6], [300, 530, 60, 66, 6], [412, 408, 32, 180, 10, "h"], [488, 460, 76, 60, 6], [580, 476, 60, 60, 6], [660, 476, 40, 60, 6],
  [50, 615, 94, 196, 47, "o"], [150, 645, 148, 204, 10], [306, 600, 132, 210, 48, "o"],
  [492, 604, 26, 12, 14], [494, 636, 14, 26, 6], [492, 672, 20, 94, 6], [500, 778, 14, 66, 8], [536, 794, 28, 40, 6], [572, 794, 90, 40, 5], [670, 794, 46, 40, 5],
  [724, 470, 6, 380, 6], [752, 476, 26, 20, 6], [790, 476, 26, 20, 6], [824, 476, 34, 20, 6], [738, 520, 160, 82, 5], [742, 612, 166, 232, 16],
];

const STREETS: [View, number, number, number, number][] = [
  [A, 1018, 1168, 232, 430], [A, 1182, 1292, 232, 335], [A, 1300, 1496, 232, 430], [A, 1180, 1292, 336, 430],
  [B, 66, 162, 228, 360], [B, 236, 322, 225, 440], [B, 334, 462, 225, 440], [B, 476, 656, 228, 440], [B, 60, 360, 500, 804], [B, 370, 640, 500, 804],
  [B, 34, 154, 826, 992], [B, 166, 374, 826, 992], [B, 384, 712, 830, 994], [B, 738, 904, 830, 994], [B, 916, 980, 822, 990], [B, 984, 1044, 822, 990],
  [B, 38, 372, 1002, 1070], [B, 388, 950, 1002, 1070], [B, 44, 156, 1086, 1370], [B, 172, 312, 1086, 1330], [B, 322, 376, 1086, 1350], [B, 452, 652, 1090, 1330], [B, 662, 862, 1090, 1300],
  [D, 46, 170, 240, 384], [D, 180, 390, 200, 384], [D, 478, 700, 200, 440], [D, 860, 960, 200, 462], [D, 1020, 1160, 190, 456], [D, 46, 150, 410, 506], [D, 160, 380, 410, 505], [D, 48, 384, 508, 630],
  [D, 488, 720, 460, 862], [D, 920, 1020, 466, 690], [D, 1040, 1180, 466, 545], [D, 1058, 1190, 560, 660], [D, 926, 1046, 700, 862], [D, 1080, 1222, 776, 866],
];

type Tag = { t: string; x: number; y: number; w: number; h: number; tx: number; ty: number; s: number; pin?: [number, number, number, number] };
const TAGS: Tag[] = [
  { t: "loadInitialFile.service.ts", x: 1636, y: 611, w: 270, h: 51, tx: 1771, ty: 643, s: 26, pin: [1770, 634, 1767, 652] },
  { t: "codeMap.mouseEvent.service.ts", x: 1548, y: 720, w: 370, h: 54, tx: 1733, ty: 754, s: 27 },
  { t: "codeMap.arrow.service.ts", x: 1689, y: 721, w: 297, h: 55, tx: 1837, ty: 756, s: 27, pin: [1831, 765, 1827, 788] },
  { t: "threeSceneService.ts", x: 1367, y: 720, w: 245, h: 54, tx: 1490, ty: 754, s: 27, pin: [1490, 754, 1490, 776] },
  { t: "codeMap.label.service.ts", x: 1645, y: 728, w: 291, h: 55, tx: 1790, ty: 764, s: 27, pin: [1787, 770, 1780, 803] },
  { t: "treeMapHelper.ts", x: 1192, y: 736, w: 210, h: 55, tx: 1297, ty: 771, s: 27, pin: [1297, 773, 1301, 802] },
  { t: "metricColorRangeDiagram.component.ts", x: 1494, y: 1005, w: 525, h: 62, tx: 1757, ty: 1044, s: 30, pin: [1754, 1046, 1747, 1077] },
  { t: "nodeDecorator.ts", x: 1167, y: 1120, w: 241, h: 63, tx: 1287, ty: 1160, s: 31 },
  { t: "fileValidator.ts", x: 1277, y: 1138, w: 211, h: 63, tx: 1383, ty: 1179, s: 31, pin: [1383, 1178, 1384, 1205] },
  { t: "scenarioHelper.ts", x: 1565, y: 1125, w: 245, h: 64, tx: 1688, ty: 1165, s: 31, pin: [1686, 1166, 1680, 1197] },
];

const FLOOR_LABELS: [string, number, number, number, boolean, string][] = [
  ["root", 1438, 1356, 28, false, "#dcdcdc"],
  ["codecharta.cc.json.gz/app", 1581, 1325, 23, false, "#c0c0c0"],
  ["codecharta_analysis.cc.json.gz", 1084, 1325, 20, true, "#c0c0c0"],
  ["tools", 981, 1299, 22, true, "#cccccc"],
  ["model", 1126, 1248, 22, true, "#cccccc"],
  ["import", 1112, 1095, 20, true, "#b4b4b4"],
  ["filter", 1142, 718, 17, true, "#a0a0a0"],
];

function CityMap() {
  return (
    <svg viewBox="0 147 2876 1473" className="block w-full" role="img" aria-label="Code map">
      {/* base plate */}
      <polygon fill="#303030" points="1052,647 1823,647 1943,1362 933,1362" />
      <polygon fill="#262626" points="1052,647 1056,647 940,1330 936,1340" />
      <polygon fill="#414141" points="1060,649 1270,649 1229,1304 958,1304" />
      <polygon fill="#535353" points="1278,649 1815,649 1926,1304 1236,1304" />
      <polygon fill="#3f3f3f" points="1283,655 1290,655 1246,1275 1238,1275" />
      <polygon fill="#454545" points="1444,655 1450,655 1450,1275 1441,1275" />
      <polygon fill="#3a3a3a" points="1806,655 1816,655 1929,1300 1916,1300" />
      <polygon fill="#282828" points="938,1330 1938,1330 1943,1362 933,1362" />
      <rect x="932" y="1361" width="1011" height="2" fill="#8b8b88" />
      <rect x="1052" y="646" width="760" height="2" fill="#77776f" />

      {/* terraces of the analysis folder */}
      {TERRACES.map(([v, x0, x1, y0, y1, max], i) => (
        <Terrace key={i} v={v} x0={x0} x1={x1} y0={y0} y1={y1} max={max} />
      ))}
      <Poly v={A} fill="#363636" p={[352, 318, 902, 318, 898, 368, 344, 368]} />
      <Poly v={A} fill="#3b3b3b" p={[908, 320, 968, 320, 962, 368, 904, 368]} />
      <Poly v={C} fill="#373737" p={[188, 292, 892, 292, 888, 358, 176, 358]} />
      <Poly v={C} fill="#373737" p={[292, 746, 862, 746, 860, 822, 284, 822]} />
      <Poly v={C} fill="#424242" p={[276, 900, 857, 900, 854, 974, 266, 974]} />
      <Poly v={C} fill="#373737" p={[92, 896, 268, 896, 260, 972, 80, 972]} />
      <Poly v={C} fill="#2f2f2f" p={[76, 976, 860, 976, 858, 1050, 62, 1050]} />

      {/* streets of the app folder */}
      {STREETS.map(([v, x0, x1, y0, y1], i) => (
        <polygon
          key={i}
          fill="#626262"
          stroke="#4a4a4a"
          points={quad(v.ox + x0 / v.sx, v.ox + x1 / v.sx, v.oy + y0 / v.sy, v.oy + y1 / v.sy)}
        />
      ))}
      <g fill="#454545">
        <polygon points={quad(1442, 1830, 870, 874)} />
        <polygon points={quad(1442, 1850, 930, 933)} />
        <polygon points={quad(1442, 1800, 957, 960)} />
        <polygon points={quad(1442, 1600, 1111, 1116)} />
        <polygon points={quad(1448, 1452, 652, 870)} />
        <polygon points={quad(1585, 1589, 930, 1270)} />
        <polygon points={quad(1524, 1527, 675, 760)} />
        <polygon points={quad(1616, 1619, 675, 760)} />
        <polygon points={quad(1700, 1705, 655, 735)} />
        <polygon points={quad(1802, 1806, 960, 1270)} />
      </g>
      <polygon fill="#414141" points="1240,1273 1918,1273 1928,1303 1236,1303" />
      <polygon fill="#383838" points="1231,1305 1933,1305 1936,1330 1230,1330" />
      <rect x="1238" y="1300" width="28" height="4" fill="#6fa044" />
      <rect x="1864" y="1300" width="64" height="4" fill="#6fa044" />
      <path d="M1523 1290h114" stroke="#777" strokeWidth="2" strokeDasharray="2 4 3 6 1 3" />

      <Blocks v={A} data={LEFT_TOP} />
      <Poly v={C} fill="#879532" p={[195, 490, 230, 490, 210, 642, 174, 642]} />
      <Poly v={C} fill="#636e24" p={[230, 490, 244, 540, 222, 690, 208, 642]} />
      <Poly v={C} fill="#dff555" p={[174, 642, 208, 642, 222, 690, 188, 688]} />
      <Blocks v={C} data={LEFT_BOTTOM} />

      {/* back row */}
      <Poly v={A} fill="#7dbb50" p={[1005, 149, 1456, 149, 1456, 153, 1005, 153]} />
      <Poly v={B} fill="#9ee269" p={[8, 142, 1000, 142, 1002, 153, 8, 153]} />
      <Blocks v={A} data={MIDDLE} />
      <Poly v={A} fill="#967b25" p={[1003, 440, 1142, 440, 1136, 675, 993, 675]} />
      <Poly v={A} fill="#6b5519" p={[1142, 530, 1143, 600, 1138, 757, 1134, 675]} />
      <Poly v={A} fill="#fbcb46" p={[993, 675, 1134, 675, 1137, 757, 1002, 757]} />
      <polygon fill="#5c883c" points="1267,907 1444,907 1444,1140 1252,1140" />
      <Blocks v={C} data={MIDDLE_BOTTOM} />
      <Poly v={C} fill="#5c1311" p={[902, 495, 1182, 495, 1174, 678, 896, 678]} />
      <Poly v={C} fill="#460d0c" p={[1182, 495, 1184, 600, 1176, 778, 1172, 678]} />
      <Poly v={C} fill="#9a231c" p={[896, 678, 1172, 678, 1176, 778, 1006, 780, 1004, 776, 910, 776]} />

      <Blocks v={B} data={RIGHT_TOP} />
      <Poly v={B} fill="#460d0c" p={[750, 76, 772, 238, 750, 364, 732, 238]} />
      <Poly v={B} fill="#5c1311" p={[750, 76, 940, 76, 960, 238, 770, 238]} />
      <Poly v={B} fill="#9a231c" p={[770, 238, 960, 238, 940, 380, 750, 380]} />
      <Poly v={B} fill="#5c1311" p={[50, 440, 206, 440, 209, 618, 48, 618]} />
      <Poly v={B} fill="#9a231c" p={[48, 618, 209, 618, 208, 716, 176, 716, 172, 734, 168, 716, 50, 714]} />
      <Blocks v={B} data={[[50, 714, 118, 60, 26], [175, 716, 88, 62, 24], [272, 694, 84, 84, 24]]} />
      <Poly v={B} fill="#460d0c" p={[630, 520, 665, 500, 667, 606, 650, 728]} />
      <Poly v={B} fill="#5c1311" p={[652, 500, 845, 500, 857, 606, 667, 606]} />
      <Poly v={B} fill="#9a231c" p={[667, 606, 857, 606, 850, 686, 656, 686]} />
      <Blocks v={B} data={[[656, 686, 190, 70, 54, "o"]]} />
      <Poly v={B} fill="#969833" p={[848, 520, 925, 520, 946, 738, 858, 738]} />
      <Poly v={B} fill="#f8fc55" p={[858, 738, 946, 738, 937, 797, 850, 795]} />
      <Poly v={B} fill="#75681d" p={[945, 530, 972, 520, 985, 664, 968, 745]} />
      <Poly v={B} fill="#9e8b2b" p={[970, 520, 1052, 520, 1064, 664, 984, 664]} />
      <Poly v={B} fill="#fde54d" p={[984, 664, 1064, 664, 1048, 745, 968, 745]} />
      <Blocks v={B} data={RIGHT_MID} />
      <Poly v={D} fill="#4b6327" p={[1012, 8, 1026, 72, 1014, 104, 1006, 40]} />
      <Poly v={D} fill="#6b8b38" p={[1012, 4, 1114, 4, 1125, 72, 1024, 72]} />
      <Poly v={D} fill="#b1e862" p={[1024, 72, 1125, 72, 1118, 105, 1015, 105]} />
      <Blocks v={D} data={RIGHT_BOTTOM} />
      <Poly v={D} fill="#6e7124" p={[728, 200, 716, 255, 732, 436, 745, 378]} />
      <Poly v={D} fill="#969833" p={[728, 200, 860, 200, 878, 378, 744, 378]} />
      <Poly v={D} fill="#f8fc55" p={[744, 378, 878, 378, 868, 438, 732, 438]} />
      <Poly v={D} fill="#6e7124" p={[530, 580, 518, 620, 526, 776, 536, 722]} />
      <Poly v={D} fill="#969833" p={[526, 580, 720, 580, 733, 722, 535, 722]} />
      <Poly v={D} fill="#f8fc55" p={[535, 722, 733, 722, 722, 778, 524, 778]} />

      <g textAnchor="middle" fontFamily="'Liberation Sans', Arial, sans-serif">
        {FLOOR_LABELS.map(([t, x, y, s, slanted, color]) => (
          <text key={t} x={x} y={y} fontSize={s} fontStyle={slanted ? "italic" : "normal"} fill={color}>
            {t}
          </text>
        ))}
      </g>

      <g textAnchor="middle" fontFamily="'Liberation Serif', 'Times New Roman', serif">
        {TAGS.map((p) => (
          <g key={p.t}>
            <rect x={p.x} y={p.y} width={p.w} height={p.h} rx={p.h / 2} fill="#dedede" fillOpacity="0.72" />
            <text x={p.tx} y={p.ty} fontSize={p.s} fill="#141414" fillOpacity="0.9">
              {p.t}
            </text>
            {p.pin && <line x1={p.pin[0]} y1={p.pin[1]} x2={p.pin[2]} y2={p.pin[3]} stroke="#eeeae0" strokeWidth="1.5" />}
          </g>
        ))}
      </g>

      {/* view cube */}
      <path d="M2792 208l-3 16" stroke="#a4e86c" strokeWidth="1" />
      <path d="M2648 302h6" stroke="#6ba6f2" strokeWidth="1" />
      <path d="M2786 394l3 35" stroke="#f2b06a" strokeWidth="1.5" />
      <polygon fill="#a6a7a8" stroke="#4a4a4a" points="2665.500,224.500 2790.500,224.500 2806.500,328 2649.500,328" />
      <polygon fill="#dbdbdd" stroke="#9a9a9a" points="2649.500,329 2806.500,329 2786,394 2670,394" />
      <path d="M2649 328.500h158" stroke="#5f5f5f" strokeWidth="2" />
    </svg>
  );
}

/* ---------- logo ---------- */

function IsoCube({ x, y, h, c }: { x: number; y: number; h: number; c: [string, string, string] }) {
  return (
    <g>
      <polygon fill={c[0]} points={`${x},${y + 6} ${x + 10},${y} ${x + 21},${y + 6} ${x + 10},${y + 12}`} />
      <polygon fill={c[1]} points={`${x},${y + 6} ${x + 10},${y + 12} ${x + 10},${y + 12 + h} ${x},${y + 6 + h}`} />
      <polygon fill={c[2]} points={`${x + 10},${y + 12} ${x + 21},${y + 6} ${x + 21},${y + 6 + h} ${x + 10},${y + 12 + h}`} />
    </g>
  );
}

function LogoArm({ x, y }: { x: number; y: number }) {
  return (
    <g transform={`translate(${x} ${y})`}>
      <IsoCube x={13} y={0} h={11} c={["#4999f6", "#3b78bd", "#4a8edb"]} />
      <IsoCube x={0} y={9} h={11} c={["#59a3f7", "#427fc2", "#5494dd"]} />
      <IsoCube x={38} y={22} h={6} c={["#84bcf9", "#5f95cf", "#6ba4e2"]} />
      <IsoCube x={12} y={18} h={9} c={["#66abf8", "#4b87c8", "#5b9ade"]} />
      <IsoCube x={24} y={27} h={7} c={["#73b2f8", "#568ecb", "#639fe0"]} />
    </g>
  );
}

/* ---------- page ---------- */

const SEGMENTS = [
  { label: "ts 58.32%", className: "flex-[1456] bg-[#71c94e]" },
  { label: "kt 28.88%", className: "flex-[720] bg-[#5aa8c8]" },
  { label: "scss 6.93%", className: "flex-[172] bg-[#c1743f]" },
  { label: "html 5.87%", className: "flex-[148] bg-[#3c50c6]" },
];

export default function App() {
  return (
    <div className="relative flex min-h-screen flex-col overflow-hidden bg-[#f4f3eb] font-['Liberation_Sans',Arial,sans-serif]">
      <header className="flex h-[53px] shrink-0 items-center border-b-2 border-[#cbcbcb] bg-[#eeeeee] pl-[10px] pr-4">
        <div className="flex items-center gap-3">
          <RoundButton label="Load files">
            <Icon name="folder" className="h-[22px] w-[23px]" box="0 0 1920 1792" />
          </RoundButton>
          <RoundButton label="Take screenshot">
            <Icon name="camera" className="h-[22px] w-[23px]" box="-64 0 1920 1792" />
          </RoundButton>
          <RoundButton label="Copy to clipboard">
            <Icon name="paste" className="size-[21px]" />
          </RoundButton>
          <RoundButton label="Export 3D model">
            <Icon name="cube" className="size-[22px]" box="-64 0 1792 1792" />
          </RoundButton>
          <RoundButton label="Reset map">
            <Icon name="undo" className="size-[22px]" />
          </RoundButton>
          <div className="flex h-9 text-[20px]">
            <button className="w-[99px] rounded-l-md bg-[#4999f6] text-white">Standard</button>
            <button className="w-[99px] rounded-r-md bg-white text-black">Delta</button>
          </div>
        </div>
        <select aria-label="Files" className="ml-3 w-[285px] appearance-none bg-transparent pt-[2px] text-[20px] leading-6 text-[#212121]">
          <option>codecharta, codecharta_anal…</option>
        </select>
        <Caret />
        <label className="ml-auto flex items-center pt-[2px] text-[20px] text-[#212121]">
          <svg viewBox="0 0 24 20" className="mr-1 h-5 w-6" fill="none" stroke="#424242" strokeWidth="1.500" aria-hidden="true">
            <rect x="1.500" y="1.500" width="20" height="13.500" rx="1.500" />
            <path d="M9.500 15v3M13.500 15v3M6.500 18.200h10" />
          </svg>
          Presentation Mode
          <span className="relative ml-[18px] flex h-[30px] w-[54px] items-center">
            <input type="checkbox" role="switch" className="absolute inset-0 size-full appearance-none" />
            <span className="ml-3 h-[21px] w-[42px] rounded-full bg-[#e0e0e0]" />
            <span className="absolute left-0 flex size-[30px] items-center justify-center rounded-full bg-[#616161] shadow-md">
              <span className="h-[3px] w-[18px] bg-white" />
            </span>
          </span>
        </label>
        <span className="ml-7 mr-5 text-[20px] text-black">Global Configuration</span>
        <RoundButton label="Open global configuration">
          <Icon name="cog" className="size-[21px]" />
        </RoundButton>
      </header>

      <div className="flex h-[27px] shrink-0 border-b-2 border-[#cbcbcb] bg-white">
        <div className="flex w-[313px] shrink-0 items-center pl-[7px]">
          <Icon name="pie" className="size-[18px] text-black" />
          <select aria-label="Distribution metric" className="ml-[9px] flex-1 appearance-none bg-transparent text-[18px] leading-6 text-[#212121]">
            <option>rloc</option>
          </select>
          <Caret />
        </div>
        <div className="flex min-w-0 flex-1 gap-px bg-white text-[15px] font-medium leading-6 text-white">
          {SEGMENTS.map((s) => (
            <div key={s.label} className={`text-center ${s.className}`}>
              {s.label}
            </div>
          ))}
        </div>
        <button aria-label="Show file extensions" className="flex w-[65px] shrink-0 items-center justify-center bg-[#e4e4e4]">
          <Caret className="text-black" />
        </button>
      </div>

      <div className="relative flex h-[67px] shrink-0 border-b-2 border-[#e0e0e0] bg-white">
        <div className="flex w-[536px] shrink-0 flex-col border-r-2 border-[#e0e0e0]">
          <div className="flex h-[46px] items-center pl-3">
            <Icon name="search" className="size-6 text-[#3c3c3c]" />
            <input
              aria-label="Search"
              placeholder="Search: *.js, **/app/*"
              className="ml-3 h-[43px] w-[306px] border-b-2 border-[#cfcfcf] bg-transparent px-1 pt-1 text-[22px] text-[#212121] placeholder:text-[#757575]"
            />
            <button aria-label="More options" className="ml-[17px] flex gap-[2px]">
              <span className="size-[5px] rounded-[1px] bg-[#212121]" />
              <span className="size-[5px] rounded-[1px] bg-[#212121]" />
              <span className="size-[5px] rounded-[1px] bg-[#212121]" />
            </button>
            <div className="ml-4 flex h-8 w-[112px] divide-x-2 divide-[#e4e4e4] rounded-md border-2 border-[#e4e4e4] text-[#212121]">
              <button aria-label="Flatten" className="flex flex-1 items-end justify-center pb-1">
                <Icon name="sitemap" className="size-[18px]" />
              </button>
              <button aria-label="Hide" className="flex flex-1 items-end justify-center pb-1">
                <Icon name="eyeSlash" className="size-[18px]" />
              </button>
            </div>
          </div>
          <OptionsToggle title="File/Node Explorer" />
        </div>
        <ToolGroup title="Metric Templates" className="w-[147px]">
          <FlatButton label="Metric templates">
            <Icon name="star" className="size-[18px]" />
          </FlatButton>
        </ToolGroup>
        <ToolGroup title="Custom Views" className="w-[184px]">
          <FlatButton label="Show custom views">
            <Icon name="cogs" className="h-[18px] w-5" box="0 0 1920 1792" />
          </FlatButton>
          <FlatButton label="Add custom view">
            <Icon name="plus" className="size-[19px]" />
          </FlatButton>
        </ToolGroup>
        <ToolGroup title="Suspicious Metrics" className="w-[179px] border-r-2 border-[#e0e0e0]">
          <FlatButton label="Suspicious metrics">
            <Icon name="warning" className="size-[18px]" />
            <span className="absolute left-[42px] top-4 flex size-[27px] items-center justify-center rounded-full bg-[#ee3524] text-[16px] font-bold text-white">6</span>
          </FlatButton>
          <FlatButton label="Risk profile">
            <Icon name="chart" className="h-[18px] w-[21px]" box="0 0 2048 1792" />
          </FlatButton>
        </ToolGroup>
        <MetricPanel
          title="Area Metric Options"
          value="rloc"
          sum="34440"
          className="flex-[526] border-r-2 border-[#e0e0e0] pl-2 pr-[9px]"
          icon={<Icon name="expand" className="mr-[10px] size-6" />}
        />
        <MetricPanel
          title="Height Metric Options"
          value="mcc"
          sum="4553"
          className="flex-[615] border-r-2 border-[#e0e0e0] pl-2 pr-[9px]"
          icon={<Icon name="vertical" className="mr-3 h-6 w-[11px]" box="512 0 768 1792" />}
        />
        <div className="flex w-[78px] shrink-0 items-center justify-center border-r-2 border-[#e0e0e0]">
          <button aria-label="Link height and color metric">
            <Icon name="link" className="size-5 text-[#424242]" />
          </button>
        </div>
        <MetricPanel
          title="Color Metric Options"
          value="mcc"
          sum="4553"
          className="flex-[612] pl-[9px] pr-[7px]"
          icon={<Icon name="brush" className="mr-3 size-6" />}
        />
        <div className="pointer-events-none absolute -top-[18px] left-[678px] h-[104px] w-[193px] rounded-[26px] border-[15px] border-[#ea4026]" />
      </div>

      <main className="relative flex-1">
        <CityMap />
        <button
          aria-label="Center map"
          className="absolute right-[33px] top-[24px] flex size-[54px] items-center justify-center rounded-full bg-[#4999f6] shadow-md"
        >
          <svg viewBox="0 0 36 36" className="size-9" aria-hidden="true">
            <circle cx="18" cy="18" r="15.250" fill="none" stroke="#fff" strokeWidth="5.500" />
            <path fill="#fff" fillRule="evenodd" d="M12 14.500L24.500 8.500V21.500L12 27.500zM15.500 16V23L21.500 19.500z" />
          </svg>
        </button>
        <div className="absolute bottom-6 left-[46px] flex flex-col items-center">
          <svg viewBox="0 0 100 58" className="h-[58px] w-[100px]" aria-hidden="true">
            <LogoArm x={41} y={0} />
            <LogoArm x={0} y={10} />
          </svg>
          <span className="mt-1 font-['Inter',sans-serif] text-[15px] font-extrabold leading-5 text-[#4999f6]">CodeCharta</span>
          <span className="mt-[18px] text-[15px] font-bold leading-5 text-[#555]">Version 1.126.0</span>
        </div>
        <button className="absolute bottom-[53px] right-0 flex h-[132px] w-[50px] items-center justify-center rounded-l-lg bg-[#4999f6] pl-1 text-[20px] text-white [writing-mode:vertical-rl]">
          LEGEND
        </button>
      </main>
    </div>
  );
}
